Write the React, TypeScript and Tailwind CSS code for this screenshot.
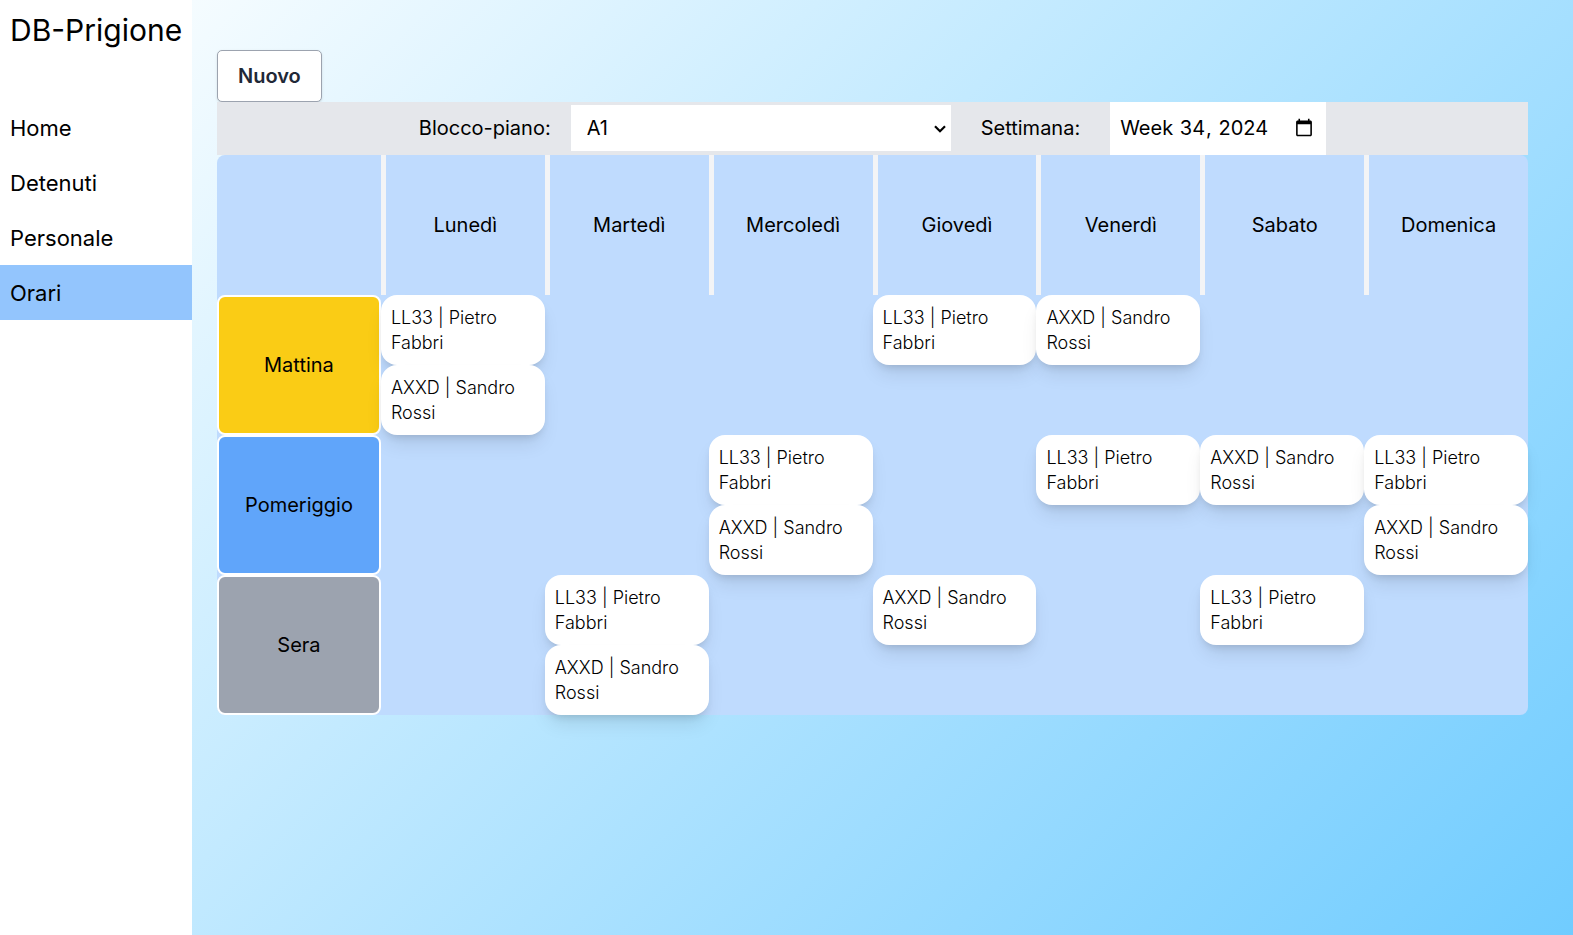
import React from "react";

const days = ["Lunedì", "Martedì", "Mercoledì", "Giovedì", "Venerdì", "Sabato", "Domenica"];
const P = "LL33 | Pietro Fabbri";
const S = "AXXD | Sandro Rossi";

const shifts = [
  { name: "Mattina", color: "bg-[#facc15]", cells: [[P, S], [], [], [P], [S], [], []] },
  { name: "Pomeriggio", color: "bg-[#60a5fa]", cells: [[], [], [P, S], [], [P], [S], [P, S]] },
  { name: "Sera", color: "bg-[#9ca3af]", cells: [[], [P, S], [], [S], [], [P], []] },
];

const links = ["Home", "Detenuti", "Personale", "Orari"];

export default function App() {
  return (
    <div className="flex min-h-screen bg-white font-['Inter',sans-serif] text-xl leading-[30px] font-normal text-black">
      <aside className="w-48 shrink-0">
        <h1 className="px-[10px] pt-[10px] text-3xl leading-10 whitespace-nowrap">DB-Prigione</h1>
        <nav className="mt-[50px] flex flex-col">
          {links.map((l) => (
            <a
              key={l}
              href={"#" + l.toLowerCase()}
              className={
                "px-[10px] pt-[13px] pb-[11px] text-[22px] leading-[31px] " +
                (l === "Orari" ? "bg-[#93c5fd]" : "")
              }
            >
              {l}
            </a>
          ))}
        </nav>
      </aside>
      <main className="min-w-0 flex-1 bg-linear-[135deg,#f5fcff,#70ccff] pt-[50px] pr-[45px] pl-[25px]">
        <button
          type="button"
          className="block h-[52px] rounded-[5px] border border-[#9ca3af] bg-white px-5 font-semibold text-[#1f2937] shadow-sm"
        >
          Nuovo
        </button>
        <div className="flex h-[53px] items-center justify-center bg-[#e5e7eb] pb-px">
          <label htmlFor="blocco" className="mr-5">
            Blocco-piano:
          </label>
          <div className="relative">
            <select
              id="blocco"
              className="block h-[46px] w-[380px] appearance-none bg-white px-4"
              defaultValue="A1"
            >
              <option>A1</option>
              <option>A2</option>
              <option>B1</option>
            </select>
            <svg
              className="pointer-events-none absolute top-5 right-[5px] h-2 w-3"
              viewBox="0 0 12 8"
              fill="none"
              stroke="black"
              strokeWidth="2.2"
              aria-hidden="true"
            >
              <path d="M1 1.2 6 6.2 11 1.2" />
            </svg>
          </div>
          <label htmlFor="settimana" className="mx-[30px]">
            Settimana:
          </label>
          <input
            id="settimana"
            type="week"
            defaultValue="2024-W34"
            className="-mb-px w-[216px] self-stretch bg-white px-[10px] pb-px"
          />
        </div>
        <table className="w-full table-fixed border-separate border-spacing-0 rounded-lg bg-[#bfdbfe]">
          <thead>
            <tr className="h-[140px]">
              <td className="p-0" />
              {days.map((d) => (
                <th key={d} scope="col" className="border-l-[5px] border-[#f3f4f6] p-0 font-normal">
                  {d}
                </th>
              ))}
            </tr>
          </thead>
          <tbody>
            {shifts.map((s) => (
              <tr key={s.name} className="h-[140px]">
                <th
                  scope="row"
                  className={"rounded-lg border-2 border-white p-0 font-normal " + s.color}
                >
                  {s.name}
                </th>
                {s.cells.map((c, i) => (
                  <td key={i} className="p-0 align-top">
                    {c.map((t) => (
                      <div
                        key={t}
                        className="h-[70px] rounded-2xl bg-white p-[10px] text-lg leading-[25px] font-light shadow-[0_12px_19px_-4px_rgb(0_0_0/0.1),0_5px_8px_-4px_rgb(0_0_0/0.15)]"
                      >
                        {t}
                      </div>
                    ))}
                  </td>
                ))}
              </tr>
            ))}
          </tbody>
        </table>
      </main>
    </div>
  );
}
